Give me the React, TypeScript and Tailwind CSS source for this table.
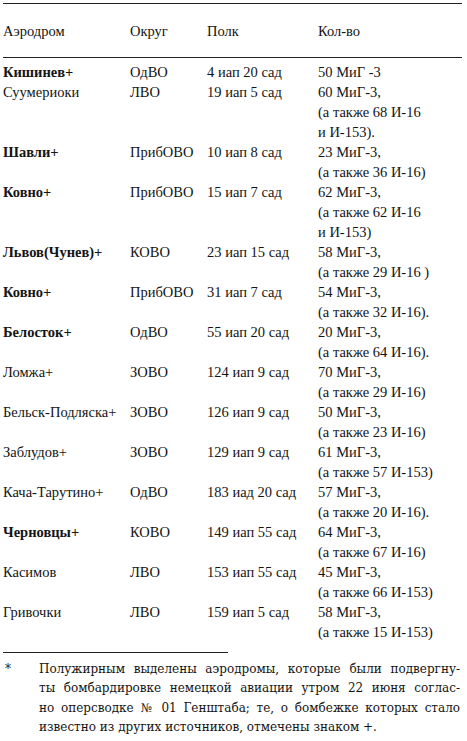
import React from 'react';

type Row = {
  name: string;
  bold?: boolean;
  district: string;
  regiment: string;
  count: string[];
};

const rows: Row[] = [
  { name: 'Кишинев+', bold: true, district: 'ОдВО', regiment: '4 иап 20 сад', count: ['50 МиГ -3'] },
  { name: 'Суумериоки', district: 'ЛВО', regiment: '19 иап 5 сад', count: ['60 МиГ-3,', '(а также 68 И-16', 'и И-153).'] },
  { name: 'Шавли+', bold: true, district: 'ПрибОВО', regiment: '10 иап 8 сад', count: ['23 МиГ-3,', '(а также 36 И-16)'] },
  { name: 'Ковно+', bold: true, district: 'ПрибОВО', regiment: '15 иап 7 сад', count: ['62 МиГ-3,', '(а также 62 И-16', 'и И-153)'] },
  { name: 'Львов(Чунев)+', bold: true, district: 'КОВО', regiment: '23 иап 15 сад', count: ['58 МиГ-3,', '(а также 29 И-16 )'] },
  { name: 'Ковно+', bold: true, district: 'ПрибОВО', regiment: '31 иап 7 сад', count: ['54 МиГ-3,', '(а также 32 И-16).'] },
  { name: 'Белосток+', bold: true, district: 'ОдВО', regiment: '55 иап 20 сад', count: ['20 МиГ-3,', '(а также 64 И-16).'] },
  { name: 'Ломжа+', district: 'ЗОВО', regiment: '124 иап 9 сад', count: ['70 МиГ-3,', '(а также 29 И-16)'] },
  { name: 'Бельск-Подляска+', district: 'ЗОВО', regiment: '126 иап 9 сад', count: ['50 МиГ-3,', '(а также 23 И-16)'] },
  { name: 'Заблудов+', district: 'ЗОВО', regiment: '129 иап 9 сад', count: ['61 МиГ-3,', '(а также 57 И-153)'] },
  { name: 'Кача-Тарутино+', district: 'ОдВО', regiment: '183 иад 20 сад', count: ['57 МиГ-3,', '(а также 20 И-16).'] },
  { name: 'Черновцы+', bold: true, district: 'КОВО', regiment: '149 иап 55 сад', count: ['64 МиГ-3,', '(а также 67 И-16)'] },
  { name: 'Касимов', district: 'ЛВО', regiment: '153 иап 55 сад', count: ['45 МиГ-3,', '(а также 66 И-153)'] },
  { name: 'Гривочки', district: 'ЛВО', regiment: '159 иап 5 сад', count: ['58 МиГ-3,', '(а также 15 И-153)'] },
];

const footnote = [
  'Полужирным выделены аэродромы, которые были подвергну-',
  'ты бомбардировке немецкой авиации утром 22 июня соглас-',
  'но оперсводке № 01 Генштаба; те, о бомбежке которых стало',
];

export default function App() {
  return (
    <div className="w-[467px] h-[741px] bg-white text-[#141414] overflow-hidden pt-[3px] px-[3px]">
      <div className="w-[459px] font-['Liberation_Serif',serif] text-[14.5px] leading-[20px]">
        {/* header */}
        <div className="grid grid-cols-[127px_77px_111px_1fr] items-center h-[55px] border-t border-b border-[#222]">
          <span>Аэродром</span>
          <span>Округ</span>
          <span>Полк</span>
          <span>Кол-во</span>
        </div>

        {/* body */}
        <div className="pt-[4px]">
          {rows.map((r, i) => (
            <div key={i} className="grid grid-cols-[127px_77px_111px_1fr]">
              <span className={r.bold ? 'font-bold' : ''}>{r.name}</span>
              <span>{r.district}</span>
              <span>{r.regiment}</span>
              <div>
                {r.count.map((c, j) => (
                  <div key={j}>{c}</div>
                ))}
              </div>
            </div>
          ))}
        </div>
      </div>

      {/* footnote */}
      <div className="mt-[10px] w-[225px] border-t border-[#222]" />
      <div className="flex pt-[7px] font-['DejaVu_Serif',serif] text-[12px] leading-[19.3px]">
        <span className="w-[36px] pl-[2px]">*</span>
        <div className="w-[421px]">
          {footnote.map((l, i) => (
            <div key={i} className="whitespace-nowrap text-justify [text-align-last:justify]">
              {l}
            </div>
          ))}
          <div className="whitespace-nowrap">известно из других источников, отмечены знаком +.</div>
        </div>
      </div>
    </div>
  );
}
